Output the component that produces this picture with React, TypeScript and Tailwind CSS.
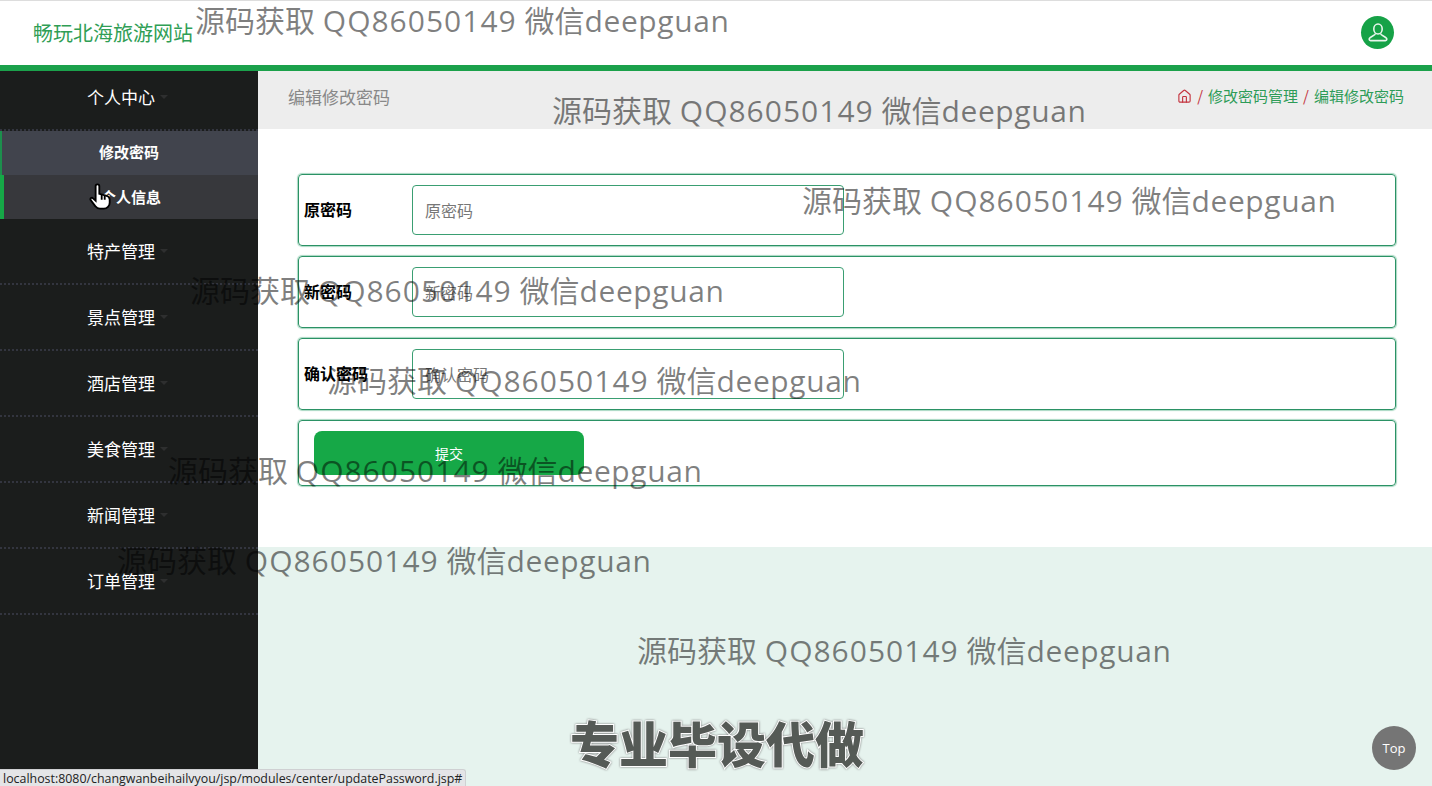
import { House } from "lucide-react";

const cjk = { fontFamily: '"Noto Sans CJK SC", "Noto Sans", sans-serif' };
const wmFont = { fontFamily: '"Open Sans", "Noto Sans CJK SC", sans-serif' };

const menu = ["特产管理", "景点管理", "酒店管理", "美食管理", "新闻管理", "订单管理"];
const marks: [string, string][] = [
  ["left-[195px]", "top-[0px]"],
  ["left-[552px]", "top-[90px]"],
  ["left-[802px]", "top-[180px]"],
  ["left-[190px]", "top-[270px]"],
  ["left-[327px]", "top-[360px]"],
  ["left-[168px]", "top-[450px]"],
  ["left-[117px]", "top-[540px]"],
  ["left-[637px]", "top-[630px]"],
];

function Field({ label, holder }: { label: string; holder: string }) {
  return (
    <div className="flex h-[72px] items-center rounded-[4px] border border-[#2b9265] pl-[5px] pr-[10px] shadow-[0_0_1px_1px_#a8d8c2]">
      <span className="mb-[2px] w-[108px] shrink-0 text-[16px] font-bold leading-[20px] text-black">{label}</span>
      <div className="flex h-[50px] w-[432px] items-center rounded-[4px] border border-[#3a9e72] pl-[12px] text-[16px] text-[#777]">
        {holder}
      </div>
    </div>
  );
}

export default function App() {
  return (
    <div className="relative flex h-[786px] w-[1432px] flex-col overflow-hidden bg-white" style={cjk}>
      <header className="flex h-[71px] shrink-0 items-center justify-between border-b-[6px] border-t border-b-[#1ba14b] border-t-[#dddddd] bg-white pl-[33px] pr-[38px]">
        <span className="text-[20px] leading-[24px] text-[#2f9e55]">畅玩北海旅游网站</span>
        <span className="mb-[2px] flex h-[33px] w-[33px] items-center justify-center rounded-full bg-[#16a247]">
          <svg width="20" height="19" viewBox="0 0 20 19" fill="none" stroke="#e8f6ec" strokeWidth="1.6">
            <ellipse cx="10" cy="6" rx="4.2" ry="5" />
            <path d="M7.4 10.400 C7.600 12.600 2.600 13 1.400 15.400 C0.900 16.600 1.400 17.600 2.600 17.600 H17.400 C18.600 17.600 19.100 16.600 18.600 15.400 C17.400 13 12.400 12.600 12.600 10.400" />
          </svg>
        </span>
      </header>
      <div className="flex min-h-0 flex-1">
        <aside className="w-[258px] shrink-0 bg-[#1b1d1c]">
          <div className="flex h-[60px] items-center border-b-2 border-dotted border-b-[#33353f] pb-[6px] pl-[87px]">
            <span className="text-[17px] leading-[20px] text-white">个人中心</span>
            <span className="ml-[5px] h-0 w-0 border-x-[4px] border-t-[4px] border-x-transparent border-t-[#2e2f2f]" />
          </div>
          <div className="flex h-[44px] items-center border-l-2 border-l-[#1d8f4d] bg-[#41444d] pb-[2px] pl-[97px] text-[15px] font-bold text-white">修改密码</div>
          <div className="flex h-[44px] items-center border-l-4 border-l-[#16a847] bg-[#37383c] pl-[97px] text-[15px] font-bold text-white">个人信息</div>
          {menu.map((m) => (
            <div key={m} className="flex h-[66px] items-center border-b-2 border-dotted border-b-[#33353f] pl-[87px]">
              <span className="text-[17px] leading-[20px] text-white">{m}</span>
              <span className="ml-[5px] h-0 w-0 border-x-[4px] border-t-[4px] border-x-transparent border-t-[#2e2f2f]" />
            </div>
          ))}
        </aside>
        <main className="flex min-w-0 flex-1 flex-col">
          <div className="flex h-[58px] shrink-0 items-center justify-between bg-[#ededed] pb-[7px] pl-[30px] pr-[28px]">
            <span className="text-[17px] text-[#888]">编辑修改密码</span>
            <span className="flex items-center text-[15px] text-[#2d9c58]">
              <House size={15} strokeWidth={1.8} className="text-[#c4343f]" />
              <span className="mx-[5px] text-[#c4343f]">/</span>
              修改密码管理
              <span className="mx-[5px] text-[#c4343f]">/</span>
              编辑修改密码
            </span>
          </div>
          <div className="flex h-[418px] shrink-0 flex-col gap-[10px] bg-white pl-[40px] pr-[36px] pt-[45px]">
            <Field label="原密码" holder="原密码" />
            <Field label="新密码" holder="新密码" />
            <Field label="确认密码" holder="确认密码" />
            <div className="h-[66px] rounded-[4px] border border-[#2b9265] pl-[15px] pt-[10px] shadow-[0_0_1px_1px_#a8d8c2]">
              <button className="flex h-[44px] w-[270px] items-center justify-center rounded-[8px] bg-[#16a847] text-[14px] text-white">提交</button>
            </div>
          </div>
          <div className="flex-1 bg-[#e6f3ee]" />
        </main>
      </div>

      {marks.map(([l, t]) => (
        <span key={l} className={`absolute ${l} ${t} whitespace-nowrap text-[30px] leading-[42px] text-black/50`} style={wmFont}>
          源码获取 <span className="tracking-[1px]">QQ86050149</span> 微信<span className="tracking-[0.6px]">deepguan</span>
        </span>
      ))}
      <span className="absolute left-[570px] top-[708px] whitespace-nowrap text-[49px] font-black leading-[68px] text-[#555a56] [-webkit-text-stroke:2px_#ffffff] [paint-order:stroke_fill] drop-shadow-[0_0_1px_#777777]">
        专业毕设代做
      </span>
      <svg className="absolute left-[89px] top-[183px]" width="23" height="27" viewBox="0 0 21 25" fill="#fff" stroke="#000" strokeWidth="1.7">
        <path d="M6 12V3a1.700 1.700 0 0 1 3.400 0V10l6.200 1.600c2 .5 3.400 1.600 3.400 3.600v3c0 3-2.400 5.600-5.400 5.600H10c-1.800 0-3.200-.8-4.200-2.200L1.400 15.800c-.8-1.500 1-2.800 2.200-1.600L6 16.400z" />
        <path d="M11.600 11v4.400M14.400 11.800V15.400" />
      </svg>
      <div className="absolute bottom-0 left-0 flex h-[17px] w-[466px] items-center rounded-tr-[3px] border-r border-t border-[#cfd0d2] bg-[#e4e5e7] pl-[3px] pt-[2px] text-[12.4px] text-[#222]" style={{ fontFamily: '"Open Sans", sans-serif' }}>
        localhost:8080/changwanbeihailvyou/jsp/modules/center/updatePassword.jsp#
      </div>
      <div className="absolute left-[1372px] top-[726px] flex h-[44px] w-[44px] items-center justify-center rounded-full bg-[#757575] pt-[1px] text-[13px] font-medium text-white" style={{ fontFamily: '"Open Sans", sans-serif' }}>
        Top
      </div>
    </div>
  );
}
